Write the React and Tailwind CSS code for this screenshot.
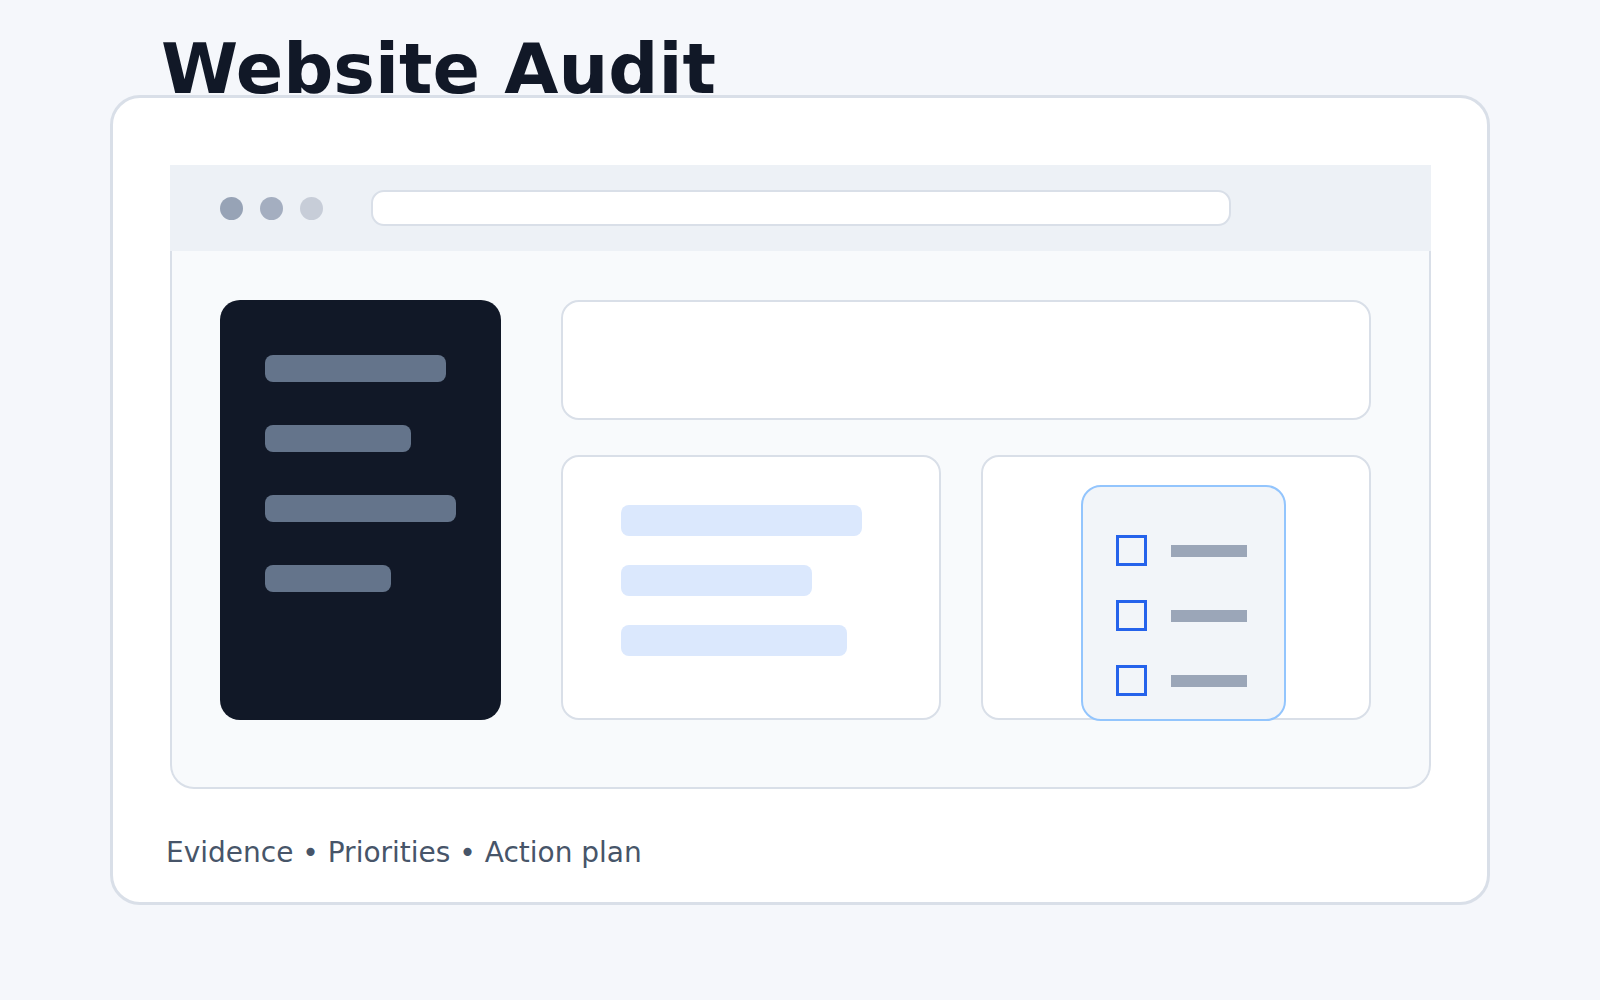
import React from 'react';

// --- Mock Data ---
const navBars = ['w-[181px]', 'w-[146px]', 'w-[191px]', 'w-[126px]'];
const contentBars = ['w-[241px]', 'w-[191px]', 'w-[226px]'];
const checklist = [1, 2, 3];

const App = () => {
  return (
    <div className="min-h-screen w-full bg-[#f5f7fb] font-['DejaVu_Sans',sans-serif]">
      <div className="w-[1380px] mx-auto pt-[34px]">

        {/* --- TITLE --- */}
        <h1 className="relative z-10 ml-[51px] text-[70px] leading-[70px] font-bold text-[#111827]">Website Audit</h1>

        {/* --- MAIN CARD --- */}
        <div className="-mt-[9px] h-[810px] bg-white border-[3px] border-[#d9dfe8] rounded-[30px] pl-[57px] pt-[67px]">

          {/* Browser window */}
          <div className="w-[1261px]">
            <div className="h-[86px] bg-[#edf1f6] flex items-center pl-[50px]">
              <div className="flex items-center gap-[17px]">
                <div className="w-[23px] h-[23px] rounded-full bg-[#97a3b6]"></div>
                <div className="w-[23px] h-[23px] rounded-full bg-[#a4aec0]"></div>
                <div className="w-[23px] h-[23px] rounded-full bg-[#c7cdd8]"></div>
              </div>
              <div className="ml-[48px] w-[860px] h-[36px] bg-white border-2 border-[#d9dfe8] rounded-[13px]"></div>
            </div>

            <div className="h-[538px] bg-[#f8fafc] border-2 border-t-0 border-[#d9dfe8] rounded-b-[24px] pl-[48px] pt-[49px] flex gap-[60px]">

              {/* Sidebar */}
              <div className="w-[281px] h-[420px] bg-[#111827] rounded-[20px] pl-[45px] pt-[55px] flex flex-col gap-[43px]">
                {navBars.map((w, i) => (
                  <div key={i} className={`${w} h-[27px] bg-[#64748b] rounded-[8px]`}></div>
                ))}
              </div>

              {/* Right column */}
              <div className="w-[810px] flex flex-col gap-[35px]">
                <div className="h-[120px] bg-white border-2 border-[#d9dfe8] rounded-[18px]"></div>

                <div className="flex gap-[40px]">
                  <div className="w-[380px] h-[265px] bg-white border-2 border-[#d9dfe8] rounded-[18px] pl-[58px] pt-[48px] flex flex-col gap-[29px]">
                    {contentBars.map((w, i) => (
                      <div key={i} className={`${w} h-[31px] bg-[#dbe8fd] rounded-[8px]`}></div>
                    ))}
                  </div>

                  <div className="w-[390px] h-[265px] bg-white border-2 border-[#d9dfe8] rounded-[18px] pl-[98px] pt-[28px]">
                    <div className="w-[205px] h-[236px] bg-[#f2f5f9] border-2 border-[#93c5fd] rounded-[20px] pl-[33px] pt-[48px] flex flex-col gap-[34px]">
                      {checklist.map((n) => (
                        <div key={n} className="flex items-center gap-[24px]">
                          <div className="w-[31px] h-[31px] border-[3px] border-[#2563eb]"></div>
                          <div className="w-[76px] h-[12px] bg-[#9ba6b8]"></div>
                        </div>
                      ))}
                    </div>
                  </div>
                </div>
              </div>
            </div>
          </div>

          <p className="mt-[46px] ml-[-4px] text-[28px] leading-[36px] text-[#475569]">Evidence • Priorities • Action plan</p>
        </div>
      </div>
    </div>
  );
};

export default App;
